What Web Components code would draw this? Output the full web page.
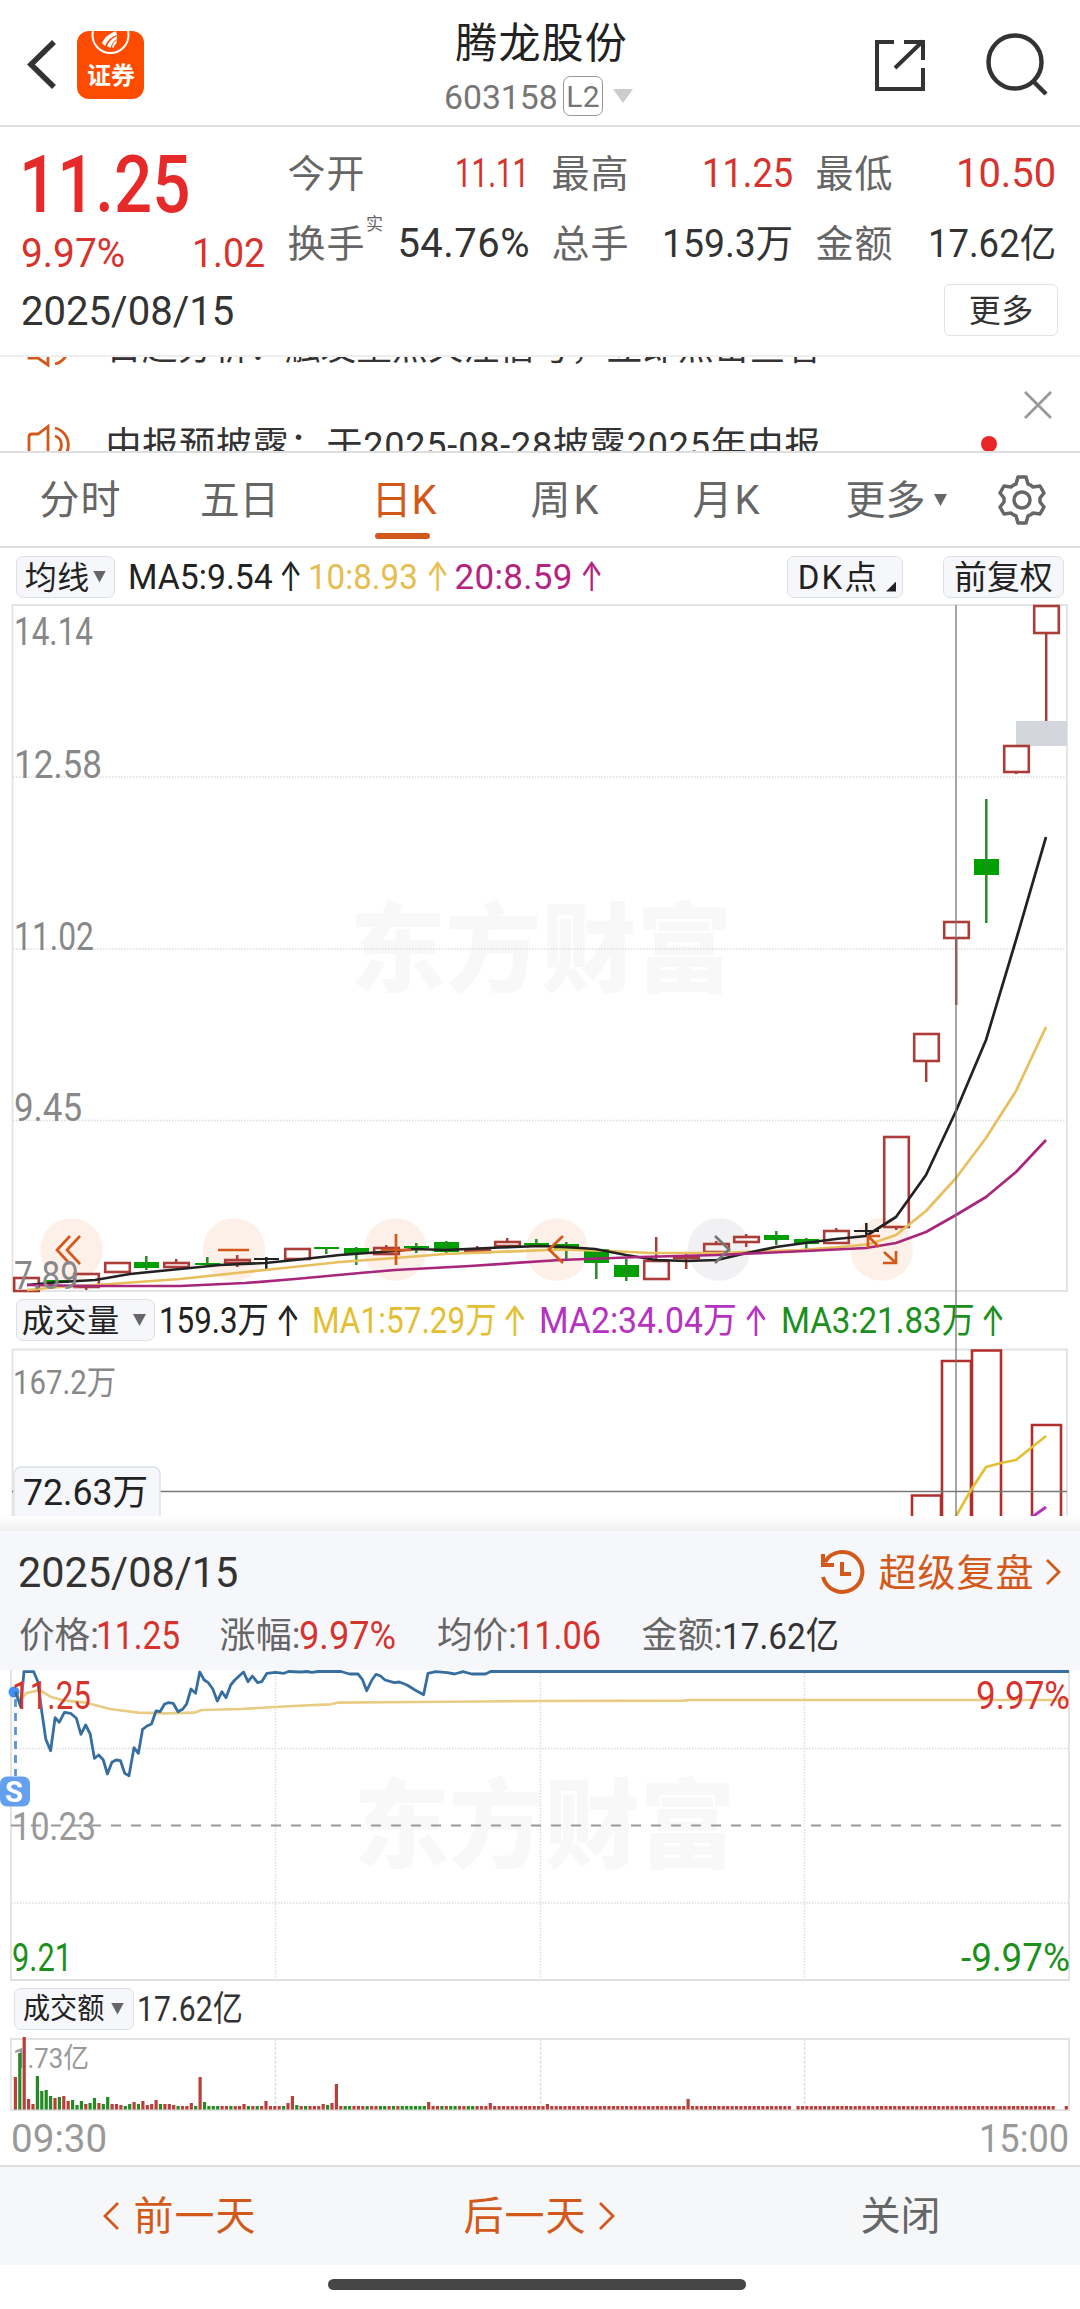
<!DOCTYPE html>
<html lang="zh-CN">
<head>
<meta charset="utf-8">
<title>腾龙股份 603158</title>
<style>
    body { margin: 0; width: 1080px; background: #fff; color: #333; font-family: Roboto, "Noto Sans CJK SC", sans-serif; }
</style>
</head>
<body>
<stock-page></stock-page>

<script>
const ROJO = '#d6332e', NARANJA = '#d2591a', VERDE = '#1c8f1c', GRIS = '#666';

// TEXT WITH A FIXED WIDTH: spreads its letters over w pixels, or narrows them when they do not fit
class FitText extends HTMLElement {
    constructor() {
        super();
        this.attachShadow({ mode: 'open' }).innerHTML = `
        <style>
            :host { display: block; flex: none; height: 1em; line-height: 1; white-space: nowrap; }
            span { display: inline-block; line-height: 1; transform-origin: 0 50%; }
        </style><span><slot></slot></span>`;
    }

    connectedCallback() {
        const w = parseFloat(this.getAttribute('w'));
        const s = parseFloat(this.getAttribute('s'));
        const n = this.textContent.length;
        const span = this.shadowRoot.querySelector('span');
        this.style.fontSize = s + 'px';
        this.style.width = w + 'px';
        this.style.marginLeft = (this.getAttribute('ml') || 0) + 'px';
        if (this.hasAttribute('c')) this.style.color = this.getAttribute('c');
        const real = span.getBoundingClientRect().width;
        const meta = w + s * 0.08;
        if (n === 1) {
            span.style.marginLeft = (w - real) / 2 + 'px';
            return;
        }
        span.style.marginLeft = -s * 0.04 + 'px';
        if (real > meta) {
            span.style.transform = `translateY(1px) scaleX(${meta / real})`;
        } else {
            span.style.transform = 'translateY(1px)';
            span.style.letterSpacing = (meta - real) / (n - 1) + 'px';
        }
    }
}
customElements.define('fit-text', FitText);

// GREY CHIP WITH ROUNDED BORDER
class ChipButton extends HTMLElement {
    constructor() {
        super();
        this.attachShadow({ mode: 'open' }).innerHTML = `
        <style>
            :host { display: flex; align-items: center; box-sizing: border-box; flex: none; height: 42px; border: 1.5px solid #dde1e6; border-radius: 7px; background: #f6f7fa; color: #222; }
        </style><slot></slot>`;
    }
}
customElements.define('chip-button', ChipButton);

class DownArrow extends HTMLElement {
    constructor() {
        super();
        this.attachShadow({ mode: 'open' }).innerHTML = `
        <style>
            :host { display: block; flex: none; width: 13px; height: 12px; color: #666; }
            div { width: 100%; height: 100%; background: currentColor; clip-path: polygon(0 0, 100% 0, 50% 100%); }
        </style><div></div>`;
    }
}
customElements.define('down-arrow', DownArrow);

// HEADER
class AppHeader extends HTMLElement {
    constructor() {
        super();
        this.attachShadow({ mode: 'open' }).innerHTML = `
        <style>
            :host { display: flex; box-sizing: border-box; height: 127px; border-bottom: 2px solid #dedede; }
            svg { display: block; flex: none; fill: none; stroke: #333; }
            .back { margin: 38px 0 0 26px; }
            .logo { margin: 31px 0 0 19px; width: 67px; height: 68px; border-radius: 12px; background: #fe4b02; overflow: hidden; display: flex; flex-direction: column; align-items: center; color: #fff; font-weight: 700; }
            .logo svg { stroke: #fff; }
            .logo fit-text { margin-top: 2px; }
            .title { margin-left: 300px; width: 198px; display: flex; flex-direction: column; }
            .title > fit-text { margin-top: 22px; color: #222; }
            .code { display: flex; align-items: center; margin-top: 11px; height: 42px; color: #777; }
            .l2 { box-sizing: border-box; width: 40px; height: 40px; margin-left: 7px; border: 1.5px solid #999; border-radius: 7px; display: flex; align-items: center; justify-content: center; }
            down-arrow { color: #ccc; width: 20px; height: 14px; margin-left: 10px; }
            .share { margin: 37px 0 0 231px; }
            .search { margin: 31px 0 0 55px; }
        </style>
        <svg class="back" width="32" height="53" stroke-width="5.5"><path d="M28 4 L5 26.5 L28 49"/></svg>
        <div class="logo">
            <svg width="67" height="30"><circle cx="33.500" cy="4" r="18" stroke-width="2"/><path d="M25 12 Q28 4 39 0 L40 4 Q32 6 28 15 Z M30 15 Q33 8 40 5 L40 8 Q35 11 33.500 17 Z M35 16 Q36 11 40 9 L39 13 Q37 14 36.500 17 Z" fill="#fff" stroke="none"/></svg>
            <fit-text w="46" s="24">证券</fit-text>
        </div>
        <div class="title">
            <fit-text w="168" s="42" ml="13">腾龙股份</fit-text>
            <div class="code">
                <fit-text w="111" s="34" ml="1">603158</fit-text>
                <div class="l2"><fit-text w="31" s="30">L2</fit-text></div>
                <down-arrow></down-arrow>
            </div>
        </div>
        <svg class="share" width="55" height="56" stroke-width="4"><path d="M21 5 H4 V52 H50 V31 M31 5 H50 V23 M22 31 L50 4"/></svg>
        <svg class="search" width="66" height="70" stroke-width="4.5"><circle cx="32" cy="31" r="26.500"/><path d="M50 50 L63 63"/></svg>`;
    }
}
customElements.define('app-header', AppHeader);

// QUOTE
class QuotePanel extends HTMLElement {
    constructor() {
        super();
        this.attachShadow({ mode: 'open' }).innerHTML = `
        <style>
            :host { display: block; box-sizing: border-box; height: 230px; border-bottom: 2px solid #eee; }
            .top { display: flex; height: 148px; }
            .price { width: 266px; padding-top: 17px; }
            .price b { display: block; font-weight: 500; margin-left: 22px; color: #e62a2a; }
            .change { display: flex; margin: 9px 0 0 23px; color: ${ROJO}; }
            .cells { display: grid; grid-template-columns: 239px 239px 238px; column-gap: 25px; row-gap: 30px; align-content: start; padding: 26px 0 0 23px; }
            .cell { display: flex; justify-content: space-between; align-items: center; height: 40px; color: #333; }
            .cell i { font-style: normal; color: ${GRIS}; display: flex; align-items: center; }
            .real { align-self: flex-start; margin-top: -8px; }
            .rojo { color: ${ROJO}; }
            .date { display: flex; justify-content: space-between; align-items: center; height: 70px; padding: 0 22px 0 23px; }
            .more { box-sizing: border-box; width: 114px; height: 52px; border: 1.5px solid #dde3e6; border-radius: 6px; display: flex; align-items: center; justify-content: center; }
        </style>
        <div class="top">
            <div class="price">
                <b><fit-text w="165" s="80">11.25</fit-text></b>
                <div class="change"><fit-text w="101" s="40">9.97%</fit-text><fit-text w="70" s="40" ml="70">1.02</fit-text></div>
            </div>
            <div class="cells">
                <div class="cell"><i><fit-text w="74" s="38">今开</fit-text></i><fit-text class="rojo" w="71" s="40">11.11</fit-text></div>
                <div class="cell"><i><fit-text w="74" s="38">最高</fit-text></i><fit-text class="rojo" w="88" s="40">11.25</fit-text></div>
                <div class="cell"><i><fit-text w="74" s="38">最低</fit-text></i><fit-text class="rojo" w="97" s="40">10.50</fit-text></div>
                <div class="cell"><i><fit-text w="74" s="38">换手</fit-text><fit-text class="real" w="17" s="17" ml="3">实</fit-text></i><fit-text w="129" s="40">54.76%</fit-text></div>
                <div class="cell"><i><fit-text w="74" s="38">总手</fit-text></i><fit-text w="128" s="39">159.3万</fit-text></div>
                <div class="cell"><i><fit-text w="74" s="38">金额</fit-text></i><fit-text w="125" s="39">17.62亿</fit-text></div>
            </div>
        </div>
        <div class="date">
            <fit-text w="210" s="41">2025/08/15</fit-text>
            <div class="more"><fit-text w="62" s="32">更多</fit-text></div>
        </div>`;
    }
}
customElements.define('quote-panel', QuotePanel);

// NEWS TICKER, caught between two lines
class NewsTicker extends HTMLElement {
    constructor() {
        super();
        const altavoz = `<svg width="48" height="42"><path d="M3 32 V13 Q3 10 6 10 H12 L22 2.500 V39 L12 32 Z M29 4 A17.500 17.500 0 0 1 29 38 M29 12 A9.500 9.500 0 0 1 29 30"/></svg>`;
        this.attachShadow({ mode: 'open' }).innerHTML = `
        <style>
            :host { display: flex; box-sizing: border-box; height: 96px; overflow: hidden; border-bottom: 2px solid #dedede; }
            .lines { width: 960px; margin-top: -31px; flex: none; }
            .line { display: flex; align-items: center; height: 42px; margin-bottom: 56px; padding-left: 26px; color: #333; }
            svg { display: block; fill: none; stroke: ${NARANJA}; stroke-width: 2.8; flex: none; }
            .side { padding-left: 21px; }
            .side svg { stroke: #999; margin: 34px 0 0 43px; }
            .dot { width: 16px; height: 16px; border-radius: 50%; background: #ea2525; margin-top: 17px; }
        </style>
        <div class="lines">
            <div class="line">${altavoz}<fit-text w="712" s="36" ml="33">日趋分析：触发重点关注信号，立即点击查看</fit-text></div>
            <div class="line">${altavoz}<fit-text w="712" s="36" ml="33">中报预披露：于2025-08-28披露2025年中报</fit-text></div>
        </div>
        <div class="side">
            <svg width="28" height="28"><path d="M1 1 L27 27 M27 1 L1 27"/></svg>
            <div class="dot"></div>
        </div>`;
    }
}
customElements.define('news-ticker', NewsTicker);

// PERIOD TABS
class PeriodTabs extends HTMLElement {
    constructor() {
        super();
        this.attachShadow({ mode: 'open' }).innerHTML = `
        <style>
            :host { display: flex; align-items: center; box-sizing: border-box; height: 95px; border-bottom: 2px solid #e0e0e0; padding-top: 1px; color: ${GRIS}; }
            .on { position: relative; color: ${NARANJA}; margin-left: 95px; }
            .on::after { content: ""; position: absolute; left: 2px; top: 53px; width: 55px; height: 6px; border-radius: 3px; background: ${NARANJA}; }
            down-arrow { margin-left: 10px; }
            svg { display: block; margin-left: 50px; fill: none; stroke: #666; stroke-width: 3.5; stroke-linejoin: round; }
        </style>
        <fit-text w="78" s="40" ml="41">分时</fit-text>
        <fit-text w="76" s="40" ml="83">五日</fit-text>
        <div class="on"><fit-text w="62" s="40">日K</fit-text></div>
        <fit-text w="65" s="40" ml="97">周K</fit-text>
        <fit-text w="64" s="40" ml="97">月K</fit-text>
        <fit-text w="77" s="40" ml="89">更多</fit-text>
        <down-arrow></down-arrow>
        <svg width="50" height="50"><path d="M21 2 H29 L31 9 Q34 10 36 12 L43 11 L47 18 L43 23 Q43 25 43 27 L47 32 L43 39 L36 38 Q34 40 31 41 L29 48 H21 L19 41 Q16 40 14 38 L7 39 L3 32 L7 27 Q7 25 7 23 L3 18 L7 11 L14 12 Q16 10 19 9 Z"/><circle cx="25" cy="25" r="8"/></svg>`;
    }
}
customElements.define('period-tabs', PeriodTabs);

const estiloBarra = `
    :host { display: flex; align-items: center; }
    .up { font-family: Inter, sans-serif; transform: scale(.85, 1.22); }
    .corner { width: 10px; height: 10px; background: #222; clip-path: polygon(100% 0, 100% 100%, 0 100%); margin: 20px 0 0 10px; }`;

// MOVING AVERAGES BAR
class MaBar extends HTMLElement {
    constructor() {
        super();
        this.attachShadow({ mode: 'open' }).innerHTML = `
        <style>${estiloBarra}
            :host { height: 56px; padding-top: 1px; box-sizing: border-box; }
        </style>
        <chip-button style="margin-left:16px;width:99px"><fit-text w="62" s="32" ml="9">均线</fit-text><down-arrow style="margin-left:5px"></down-arrow></chip-button>
        <fit-text w="142" s="35" ml="14" c="#222">MA5:9.54</fit-text><fit-text class="up" w="16" s="33" ml="10" c="#222">↑</fit-text>
        <fit-text w="107" s="35" ml="12" c="#e6bd4e">10:8.93</fit-text><fit-text class="up" w="16" s="33" ml="12" c="#e6bd4e">↑</fit-text>
        <fit-text w="115" s="35" ml="12" c="#b3237f">20:8.59</fit-text><fit-text class="up" w="16" s="33" ml="11" c="#b3237f">↑</fit-text>
        <chip-button style="margin-left:189px;width:116px"><fit-text w="77" s="33" ml="11">DK点</fit-text><div class="corner"></div></chip-button>
        <chip-button style="margin-left:40px;width:121px"><fit-text w="96" s="33" ml="11">前复权</fit-text></chip-button>`;
    }
}
customElements.define('ma-bar', MaBar);

// VOLUME BAR
class VolumeBar extends HTMLElement {
    constructor() {
        super();
        this.attachShadow({ mode: 'open' }).innerHTML = `
        <style>${estiloBarra}
            :host { height: 56px; }
        </style>
        <chip-button style="margin-left:16px;width:139px"><fit-text w="95" s="32" ml="6">成交量</fit-text><down-arrow style="margin-left:15px"></down-arrow></chip-button>
        <fit-text w="107" s="36" ml="5" c="#222">159.3万</fit-text><fit-text class="up" w="16" s="35" ml="11" c="#222">↑</fit-text>
        <fit-text w="182" s="36" ml="19" c="#e3bf33">MA1:57.29万</fit-text><fit-text class="up" w="16" s="35" ml="10" c="#e3bf33">↑</fit-text>
        <fit-text w="195" s="36" ml="19" c="#b533c0">MA2:34.04万</fit-text><fit-text class="up" w="16" s="35" ml="11" c="#b533c0">↑</fit-text>
        <fit-text w="191" s="36" ml="20" c="${VERDE}">MA3:21.83万</fit-text><fit-text class="up" w="16" s="35" ml="10" c="${VERDE}">↑</fit-text>`;
    }
}
customElements.define('volume-bar', VolumeBar);

const estiloSvg = `
    :host { display: block; }
    svg { display: block; overflow: visible; fill: none; }
    text { font-size: 38px; fill: #888; stroke: none; }
    .marca { font-weight: 900; font-size: 97px; fill: #f8f8f8; }`;
const linea = (pts, color, ancho = 2.7) => `<polyline points="${pts}" stroke="${color}" stroke-width="${ancho}" stroke-linejoin="round"/>`;
const texto = (x, y, w, t, extra = '') => `<text x="${x - 2}" y="${y}" textLength="${w + 4}" lengthAdjust="spacingAndGlyphs" ${extra}>${t}</text>`;

// type, left x, body top, body bottom, high, low
const velas = [
    ['r', 13, 1277, 1292, 1277, 1292], ['g', 44, 1280, 1283, 1280, 1283], ['r', 73, 1273, 1288, 1273, 1290],
    ['r', 104, 1262, 1273, 1262, 1273], ['g', 134, 1262, 1268, 1256, 1270], ['r', 163, 1262, 1268, 1259, 1268],
    ['g', 195, 1263, 1265, 1257, 1267], ['r', 224, 1259, 1264, 1255, 1267], ['k', 254, 1258, 1260, 1257, 1271],
    ['r', 284, 1248, 1260, 1248, 1260], ['g', 314, 1247, 1249, 1248, 1254], ['g', 344, 1248, 1254, 1247, 1265],
    ['r', 373, 1247, 1255, 1245, 1255], ['g', 404, 1246, 1248, 1243, 1253], ['g', 434, 1242, 1252, 1241, 1253],
    ['r', 464, 1249, 1253, 1246, 1253], ['r', 494, 1241, 1247, 1238, 1247], ['g', 524, 1243, 1245, 1239, 1247],
    ['g', 554, 1244, 1251, 1242, 1261], ['g', 584, 1249, 1263, 1249, 1279], ['g', 614, 1265, 1277, 1259, 1281],
    ['r', 643, 1260, 1280, 1237, 1280], ['r', 673, 1256, 1259, 1252, 1269], ['r', 703, 1243, 1253, 1241, 1253],
    ['r', 733, 1236, 1243, 1234, 1247], ['g', 764, 1235, 1240, 1231, 1245], ['g', 794, 1239, 1244, 1238, 1249],
    ['r', 823, 1230, 1244, 1228, 1244], ['k', 854, 1230, 1232, 1223, 1236], ['r', 883, 1136, 1228, 1136, 1230],
    ['r', 913, 1033, 1062, 1033, 1082], ['r', 943, 921, 939, 921, 1005], ['g', 974, 859, 875, 799, 923],
    ['r', 1003, 745, 773, 745, 774], ['r', 1033, 605, 634, 605, 721]
];

// DAILY CANDLES
class KlineChart extends HTMLElement {
    constructor() {
        super();
        const dibujo = velas.map(([tipo, x, a, b, alto, bajo]) => {
            const cx = x + (tipo === 'r' ? 13.2 : 12.3);
            if (tipo !== 'r') {
                const color = tipo === 'g' ? '#00a000' : '#222';
                return `<rect x="${x}" y="${a}" width="25" height="${b - a}" fill="${color}"/><path d="M${cx} ${alto}V${bajo}" stroke="${tipo === 'g' ? '#268a26' : '#222'}" stroke-width="2.5"/>`;
            }
            return `<rect x="${x + 1.2}" y="${a + 1}" width="24.6" height="${b - a - 2}" stroke="#ab3d39" stroke-width="2.6"/>
                <path d="M${cx} ${alto}V${a}M${cx} ${b}V${bajo}" stroke="#ab3d39" stroke-width="2.5"/>`;
        }).join('');
        const circulos = [71.5, 234, 395.5, 557, 719, 881.6].map((x, i) =>
            `<circle cx="${x}" cy="1249.5" r="31.3" fill="${i === 4 ? '#f1f1f3' : '#fdf0e9'}"/>`).join('');
        this.attachShadow({ mode: 'open' }).innerHTML = `
        <style>${estiloSvg}</style>
        <svg width="1080" height="688" viewBox="0 604 1080 688">
            ${texto(352, 984, 378, '东方财富', 'class="marca"')}
            <path d="M13 777H1067M13 949H1067M13 1120.5H1067" stroke="#ddd" stroke-width="1.5" stroke-dasharray="1.5 1.5"/>
            <rect x="12.5" y="605" width="1054.5" height="686" stroke="#e3e3e3" stroke-width="1.8"/>
            ${circulos}
            <rect x="1016" y="721" width="51" height="25" fill="#d3d7dd"/>
            ${dibujo}
            ${linea('27,1290 60,1287 110,1284 180,1279 265,1270 340,1262 395,1258 445,1254 560,1249.5 610,1251 650,1253 717,1253 800,1250 840,1247 870,1244 896,1235 926,1211 956,1178 986,1138 1016,1091 1046,1027', '#e8bf5c')}
            ${linea('27,1285 60,1282 95,1280 130,1274 170,1270 220,1265 265,1263 295,1260 340,1255 395,1251 415,1249 445,1250 500,1247.5 540,1246 566,1247 595,1249 626,1255 656,1260 687,1261 717,1260 747,1253 776,1247 805,1243 836,1239 866,1236 896,1217 926,1175 956,1111 986,1040 1016,940 1046,837', '#222')}
            ${linea('27,1285 90,1286 180,1286 245,1283 295,1279 360,1273 395,1270 470,1266 560,1260 640,1257 717,1255 806,1251 866,1248 896,1243 926,1232 956,1215 986,1197 1016,1172 1046,1140', '#a8267c')}
            <g stroke="${NARANJA}" stroke-width="2.7">
                <path d="M70 1236L57 1250L70 1264M80 1236L67 1250L80 1264M218 1250H249M381 1250H411M396 1234V1265M563 1236L549 1249.5L563 1263"/>
                <path d="M715 1236L729 1249.5L715 1263" stroke="#777"/>
                <path d="M868 1248V1236H880M868 1236L879 1247M896 1251V1263H883M896 1263L884 1252"/>
            </g>
            ${texto(16, 645, 75, '14.14')}${texto(16, 778, 84, '12.58')}${texto(16, 950, 76, '11.02')}${texto(16, 1121, 64, '9.45')}${texto(16, 1289, 61, '7.89')}
        </svg>`;
    }
}
customElements.define('kline-chart', KlineChart);

// DAILY VOLUME, cut off by the panel below
class VolumeChart extends HTMLElement {
    constructor() {
        super();
        this.attachShadow({ mode: 'open' }).innerHTML = `
        <style>${estiloSvg} svg { overflow: hidden; }</style>
        <svg width="1080" height="168" viewBox="0 1348 1080 168">
            <path d="M12.5 1516V1349.5H1067V1516" stroke="#e3e3e3" stroke-width="1.8"/>
            <path d="M912 1520V1495.5H941V1520M942 1520V1361H971V1520M972 1520V1350.5H1001V1520M1032 1520V1425H1061V1520" stroke="#b02f2c" stroke-width="2.6"/>
            <path d="M12 1491.5H1067" stroke="#777" stroke-width="1.3"/>
            ${linea('955,1518 971,1490 986,1467 1001,1463 1016,1460 1031,1448 1046,1436', '#e3bf33')}
            ${linea('1028,1520 1046,1507', '#b533c0', 3)}
            <rect x="14" y="1467" width="146" height="56" rx="7" fill="#f6f7fa" stroke="#dde1e6" stroke-width="1.5"/>
            ${texto(15, 1394, 99, '167.2万', 'style="font-size:33px"')}
            ${texto(25, 1505, 121, '72.63万', 'style="font-size:36px;fill:#222"')}
        </svg>`;
    }
}
customElements.define('volume-chart', VolumeChart);

// REPLAY SUMMARY
class ReplayPanel extends HTMLElement {
    constructor() {
        super();
        this.attachShadow({ mode: 'open' }).innerHTML = `
        <style>
            :host { display: block; height: 154px; background: linear-gradient(#fff, #f0f0f0) 0 0 / 100% 15px no-repeat, #f6f7fa; }
            .head { display: flex; align-items: center; height: 82px; padding: 15px 19px 0 20px; color: #333; }
            .link { display: flex; align-items: center; margin-left: auto; color: ${NARANJA}; }
            .row { display: flex; align-items: center; height: 44px; padding-left: 20px; }
            svg { display: block; fill: none; stroke: ${NARANJA}; }
        </style>
        <div class="head">
            <fit-text w="217" s="42">2025/08/15</fit-text>
            <div class="link">
                <svg width="46" height="48" stroke-width="4"><path d="M6 14 A20 20 0 1 1 4 29"/><path d="M4 6 V17 H15" stroke-width="4"/><path d="M23 14 V26 H32" stroke-width="4"/></svg>
                <fit-text w="152" s="38" ml="15">超级复盘</fit-text>
                <svg width="16" height="28" style="margin-left:13px" stroke-width="2.8"><path d="M2 2 L14 14 L2 26"/></svg>
            </div>
        </div>
        <div class="row">
            <fit-text w="77" s="36" c="${GRIS}">价格:</fit-text><fit-text w="81" s="39" ml="1" c="${ROJO}">11.25</fit-text>
            <fit-text w="78" s="36" ml="42" c="${GRIS}">涨幅:</fit-text><fit-text w="94" s="39" ml="2" c="${ROJO}">9.97%</fit-text>
            <fit-text w="77" s="36" ml="43" c="${GRIS}">均价:</fit-text><fit-text w="83" s="39" ml="2" c="${ROJO}">11.06</fit-text>
            <fit-text w="78" s="36" ml="43" c="${GRIS}">金额:</fit-text><fit-text w="114" s="37" ml="2" c="#333">17.62亿</fit-text>
        </div>`;
    }
}
customElements.define('replay-panel', ReplayPanel);

// MINUTE PRICE
class MinuteChart extends HTMLElement {
    constructor() {
        super();
        this.attachShadow({ mode: 'open' }).innerHTML = `
        <style>${estiloSvg}</style>
        <svg width="1080" height="311">
            ${texto(356, 190, 377, '东方财富', 'class="marca"')}
            <path d="M11 78.5H1069M11 233H1069M275.5 0V310M540.5 0V310M804.5 0V310" stroke="#ddd" stroke-width="1.5" stroke-dasharray="1.5 1.5"/>
            <path d="M11 0V310H1069V0" stroke="#e0e0e0" stroke-width="1.8"/>
            <path d="M11 155.5H1064" stroke="#999" stroke-width="2.2" stroke-dasharray="10 10"/>
            ${linea('15.5,22 20.7,30 26,23.3 39.6,20 51.7,27.3 65.4,30.7 86,32.7 110,39 138,42.7 165,43.3 194.6,42.7 201.4,40 241,39 292.7,36 330.6,34.3 337.5,32.7 413,32 540,31 684,30.7 690,30 1069,30', '#e9cc83')}
            <circle cx="14" cy="22" r="5.500" fill="#4590f5"/>
            <path d="M15.5 29V106" stroke="#5b95d8" stroke-width="2.8" stroke-dasharray="8 6"/>
            ${linea('15.5,21.7 20.7,36.7 24,1.7 33.7,1.7 37.9,11.7 42,43.3 45.8,69.3 50.6,80.7 55.1,47.7 59.2,52.3 64.4,42.3 70.6,43.3 76.4,48.3 80.9,64.3 85.7,55 90.2,64 94.4,88.3 98.8,85 103.3,90 107.4,104 111.9,92.3 116,90 120.5,90.7 124.7,103.3 129,105.7 134,77.7 138.4,83.3 142.6,59.3 147,56 151.5,54 156,41 160,41.7 164.6,34 168.7,32.7 173.2,33.3 178,41.7 182.5,39.3 186.6,34 191,19 195.6,23.3 199.7,2 204.2,10 208.3,12.7 212.8,19 217.3,31 222,21.7 226,27.7 230.7,15 234.8,10 243.5,2 248,11.7 252.4,6 257.6,12.7 261.7,11.7 266.9,3.3 275.5,2.3 284,3.3 288.6,1.5 301,2 307,1.5 312,2.4 318,1.5 341,1.5 349.5,4 358,4 362.3,9.3 366.7,20.7 371.9,10 376,4.3 380.5,6 385,10 394.3,12.7 399.4,12 407,15 415,20 423.6,24.7 428,3.3 435.6,1.7 447.7,2.7 454.5,4 463,1.7 471.8,4 485.5,4 490.7,1.5 1069,1.5', '#366f9f', 2.8)}
            ${texto(14, 39, 75, '11.25', `style="fill:${ROJO}"`)}
            ${texto(978, 39, 90, '9.97%', `style="fill:${ROJO}"`)}
            ${texto(14, 170, 80, '10.23', 'style="fill:#999"')}
            ${texto(14, 301, 56, '9.21', `style="fill:${VERDE}"`)}
            ${texto(963, 301, 105, '-9.97%', `style="fill:${VERDE}"`)}
            <rect x="0" y="106.500" width="30" height="30" rx="7" fill="#659ff0"/>
            <text x="5" y="132" style="font-size:29px;font-weight:700;fill:#fff">S</text>
        </svg>`;
    }
}
customElements.define('minute-chart', MinuteChart);

// TURNOVER PER MINUTE: the bars that rise over the floor of 3px
const barras = {
    0: 'r32', 1: 'g56', 2: 'r72', 3: 'r10', 4: 'r5', 5: 'g33', 6: 'g18', 7: 'g19', 8: 'g13', 9: 'r11', 10: 'g12', 11: 'r13',
    12: 'r8', 13: 'g9', 14: 'g4', 15: 'g8', 16: 'r5', 17: 'g6', 18: 'g11', 19: 'r6', 20: 'g5', 21: 'g12', 22: 'r5', 23: 'r5',
    24: 'r4', 25: 'g3', 26: 'g5', 27: 'r7', 28: 'g5', 29: 'r8', 30: 'r4', 31: 'r5', 32: 'r9', 33: 'g5', 34: 'r5', 35: 'r5',
    36: 'r4', 37: 'g3', 40: 'r6', 41: 'g3', 42: 'r32', 43: 'g7', 44: 'g3', 45: 'g3', 46: 'g3', 49: 'g3', 52: 'r5', 53: 'g3',
    55: 'g3', 57: 'r8', 61: 'g3', 62: 'r6', 63: 'r13', 64: 'g4', 66: 'g3', 70: 'r5', 71: 'g4', 72: 'r6', 73: 'r25',
    75: 'g3', 76: 'g3', 80: 'g3', 83: 'g3', 84: 'g3', 86: 'g3', 88: 'g3', 89: 'g3', 90: 'g3', 91: 'g3', 92: 'g3', 93: 'g3',
    94: 'r7', 97: 'g3', 99: 'g3', 100: 'g3', 103: 'g3', 104: 'g3', 108: 'r6', 121: 'r5', 153: 'r10'
};

class TurnoverChart extends HTMLElement {
    constructor() {
        super();
        let dibujo = '';
        for (let i = 0; i < 240; i++) {
            if (i === 177 || i === 237 || i === 238) continue;
            const b = barras[i] || 'r3';
            const h = parseInt(b.slice(1)) + 0.5;
            dibujo += `<rect x="${(13.8 + i * 4.397).toFixed(1)}" y="${74.5 - h}" width="3.200" height="${h}" fill="${b[0] === 'r' ? '#b8403c' : '#228b22'}"/>`;
        }
        this.attachShadow({ mode: 'open' }).innerHTML = `
        <style>${estiloSvg}
            .bar { display: flex; align-items: center; height: 54px; padding-top: 1px; box-sizing: border-box; }
            .axis { display: flex; justify-content: space-between; height: 53px; align-items: center; padding: 0 12px 0 13px; color: #999; }
        </style>
        <div class="bar">
            <chip-button style="margin-left:14px;width:120px"><fit-text w="79" s="29" ml="9">成交额</fit-text><down-arrow style="margin-left:8px"></down-arrow></chip-button>
            <fit-text w="103" s="35" ml="4" c="#333">17.62亿</fit-text>
        </div>
        <svg width="1080" height="77">
            <path d="M275.5 3V75M540.5 3V75M804.5 3V75" stroke="#ddd" stroke-width="1.5" stroke-dasharray="3 1.5"/>
            <rect x="11" y="4" width="1058" height="71" stroke="#e0e0e0" stroke-width="1.8"/>
            ${texto(15, 33, 72, '1.73亿', 'style="font-size:28px;fill:#999"')}
            ${dibujo}
        </svg>
        <div class="axis"><fit-text w="93" s="39">09:30</fit-text><fit-text w="87" s="39">15:00</fit-text></div>`;
    }
}
customElements.define('turnover-chart', TurnoverChart);

// DAY NAVIGATION
class DayNav extends HTMLElement {
    constructor() {
        super();
        this.attachShadow({ mode: 'open' }).innerHTML = `
        <style>
            :host { display: block; height: 144px; }
            .nav { display: flex; align-items: center; box-sizing: border-box; height: 100px; border-top: 2px solid #dedede; background: #f6f7f9; color: ${NARANJA}; }
            svg { display: block; fill: none; stroke: ${NARANJA}; stroke-width: 2.8; }
            .home { width: 418px; height: 11px; border-radius: 6px; background: #464646; margin: 14px 0 0 328px; }
        </style>
        <div class="nav">
            <svg width="18" height="30" style="margin-left:103px"><path d="M15 2 L2 15 L15 28"/></svg>
            <fit-text w="119" s="40" ml="14">前一天</fit-text>
            <fit-text w="119" s="40" ml="211">后一天</fit-text>
            <svg width="18" height="30" style="margin-left:14px"><path d="M2 2 L15 15 L2 28"/></svg>
            <fit-text w="77" s="40" ml="246" c="${GRIS}">关闭</fit-text>
        </div>
        <div class="home"></div>`;
    }
}
customElements.define('day-nav', DayNav);

class StockPage extends HTMLElement {
    constructor() {
        super();
        this.attachShadow({ mode: 'open' }).innerHTML = `
        <style>
            :host { display: block; height: 2309px; overflow: hidden; }
            .daily { position: relative; }
            /* crosshair, runs over both daily charts */
            .cross { position: absolute; left: 955px; top: 57px; bottom: 0; width: 1.5px; background: #777; opacity: .65; }
        </style>
        <app-header></app-header>
        <quote-panel></quote-panel>
        <news-ticker></news-ticker>
        <period-tabs></period-tabs>
        <div class="daily">
            <ma-bar></ma-bar>
            <kline-chart></kline-chart>
            <volume-bar></volume-bar>
            <volume-chart></volume-chart>
            <div class="cross"></div>
        </div>
        <replay-panel></replay-panel>
        <minute-chart></minute-chart>
        <turnover-chart></turnover-chart>
        <day-nav></day-nav>`;
    }
}
customElements.define('stock-page', StockPage);
</script>
</body>
</html>
